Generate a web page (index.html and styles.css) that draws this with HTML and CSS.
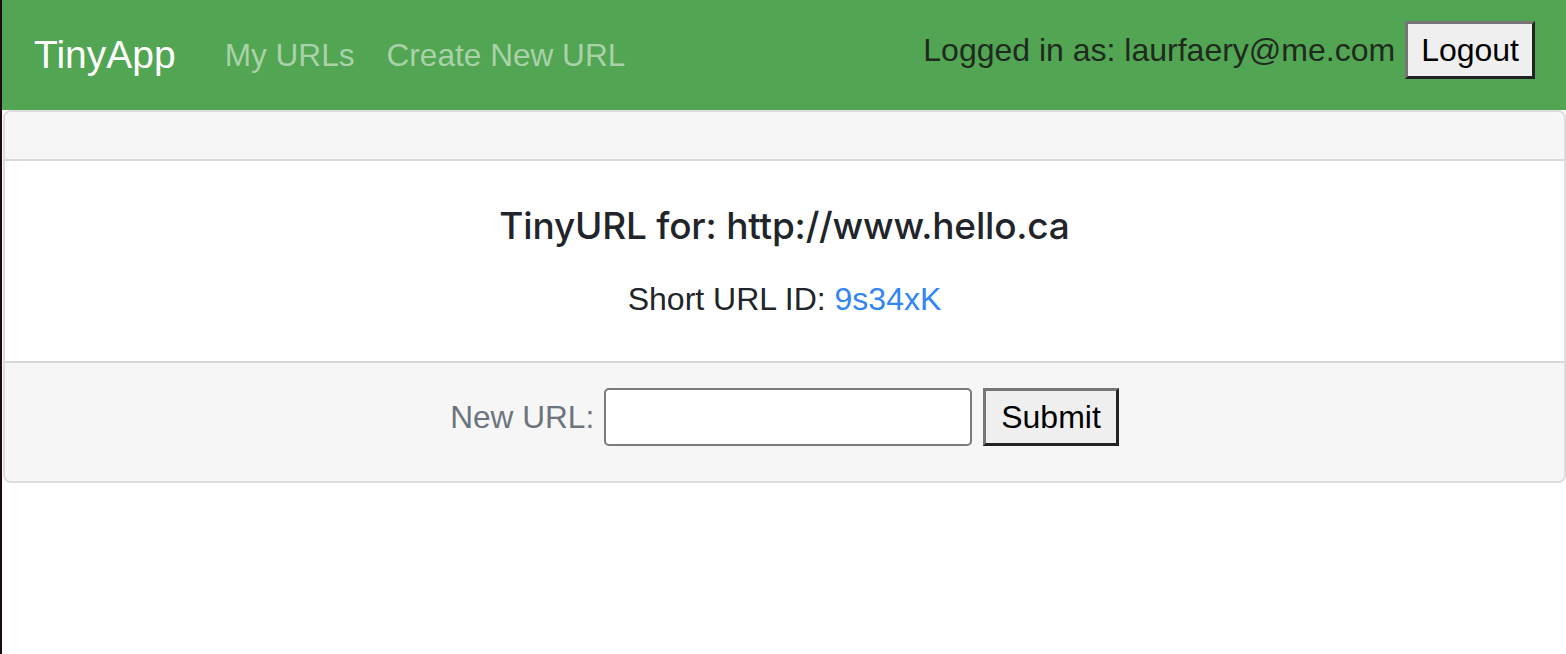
FILE: index.html
```html
<!DOCTYPE html>
<html>
<head>
<meta charset="utf-8">
<link rel="stylesheet" href="styles.css">
<title>TinyApp</title>
</head>
<body>
<div class="page">
  <nav class="navbar">
    <a class="brand" href="#">TinyApp</a>
    <div class="nav-links">
      <a class="nav-link" href="#">My URLs</a>
      <a class="nav-link" href="#">Create New URL</a>
    </div>
    <form class="user">
      <span class="user-text">Logged in as: laurfaery@me.com</span>
      <button class="btn" type="button">Logout</button>
    </form>
  </nav>
  <div class="card">
    <div class="card-header"></div>
    <div class="card-body">
      <h5 class="card-title">TinyURL for: http://www.hello.ca</h5>
      <p class="card-text">Short URL ID: <a href="#">9s34xK</a></p>
    </div>
    <div class="card-footer">
      <form class="edit-form">
        <label class="label">New URL:</label>
        <input class="input" type="text">
        <button class="btn" type="button">Submit</button>
      </form>
    </div>
  </div>
</div>
</body>
</html>
```
FILE: styles.css
```css
html, body {
  margin: 0;
  padding: 0;
  background: #fff;
}
body {
  font-family: "Liberation Sans", Arial, sans-serif;
  color: #212529;
}
.page {
  border-left: 2px solid #1c0a0c;
  min-height: 654px;
  box-sizing: border-box;
}
.navbar {
  display: flex;
  align-items: center;
  height: 110px;
  background: #52a552;
  padding: 0 31px 0 32px;
  box-sizing: border-box;
}
.brand {
  color: #fff;
  font-size: 39px;
  text-decoration: none;
  margin-right: 33px;
  line-height: 60px;
}
.nav-links {
  display: flex;
  flex: 1;
}
.nav-link {
  color: #a9d2a9;
  font-size: 31.6px;
  text-decoration: none;
  padding: 0 16px;
  line-height: 48px;
}
.user {
  display: flex;
  align-items: center;
  gap: 10px;
  margin-bottom: 10px;
}
.user-text {
  font-size: 32px;
  color: #1f2a1f;
}
.btn {
  font-family: "Liberation Sans", Arial, sans-serif;
  font-size: 32px;
  color: #000;
  background: #efefef;
  border-style: solid;
  border-width: 3px;
  border-color: #767676 #222 #222 #767676;
  height: 58px;
  padding: 0 13px;
  margin: 0;
}
.card {
  margin-top: 0;
  margin-left: 1px;
  border: 2px solid #dcdcdc;
  border-radius: 8px;
  overflow: hidden;
}
.card-header {
  height: 47px;
  background: #f6f6f6;
  border-bottom: 2px solid #d8d8d8;
}
.card-body {
  padding: 41px 40px 0;
  height: 200px;
  box-sizing: border-box;
  text-align: center;
}
.card-title {
  font-family: Inter, "Liberation Sans", sans-serif;
  font-size: 37px;
  font-weight: 500;
  margin: 0;
  line-height: 48px;
  letter-spacing: -0.2px;
}
.card-text {
  font-size: 32px;
  margin: 25px 0 0;
  line-height: 48px;
}
.card-text a {
  color: #3385f6;
  text-decoration: none;
}
.card-footer {
  background: #f6f6f6;
  border-top: 2px solid #d8d8d8;
  height: 120px;
  box-sizing: border-box;
  padding-top: 25px;
}
.edit-form {
  display: flex;
  justify-content: center;
  align-items: center;
  gap: 10px;
}
.label {
  font-size: 31.6px;
  color: #6c757d;
}
.input {
  width: 368px;
  height: 58px;
  box-sizing: border-box;
  border: 2px solid #7b7b7b;
  border-radius: 5px;
  background: #fff;
  margin: 0;
}
.edit-form .btn {
  margin-left: 1px;
  padding: 0 15px;
}
```
